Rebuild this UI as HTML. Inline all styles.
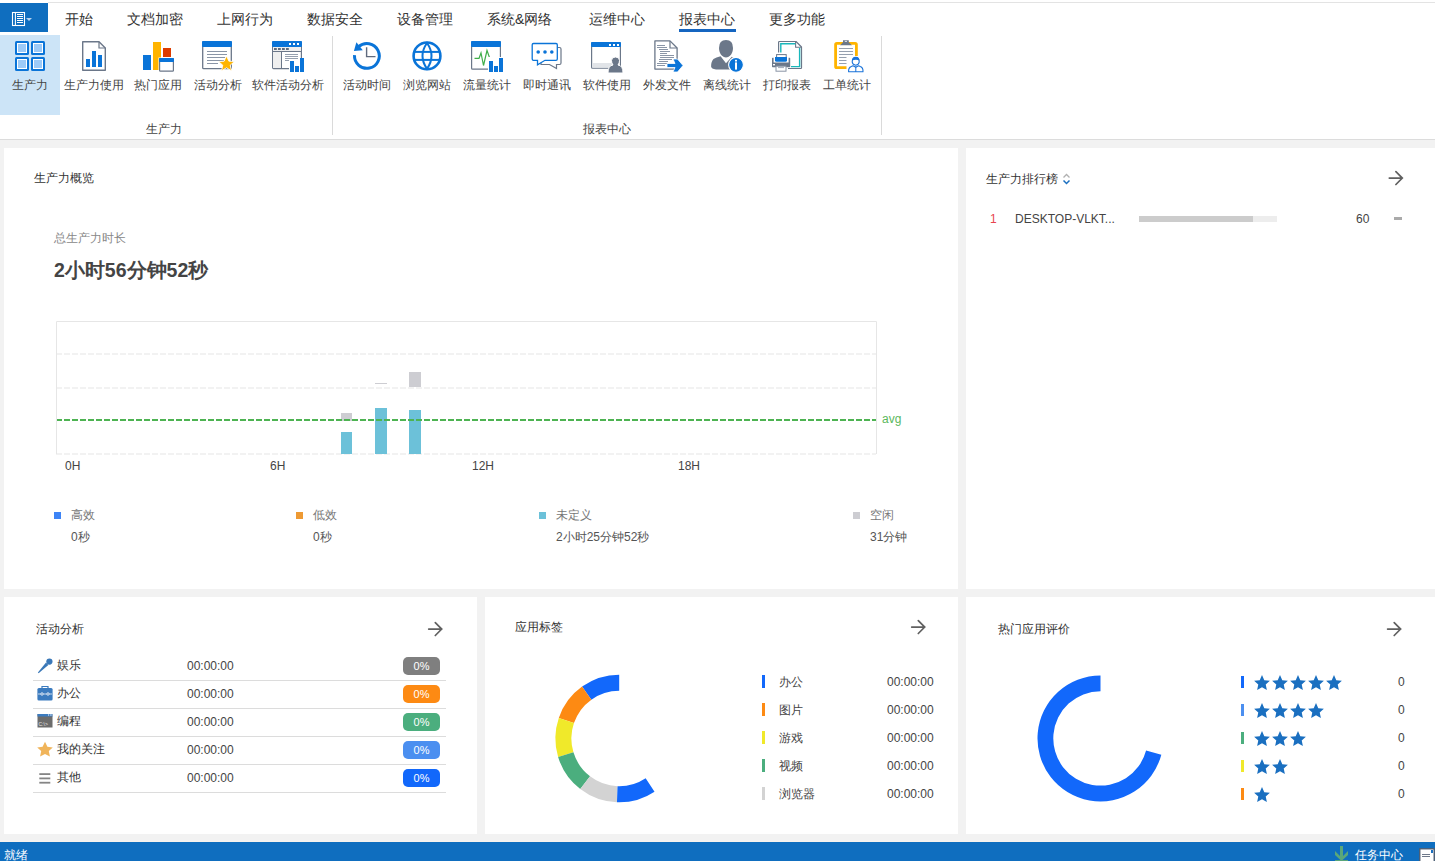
<!DOCTYPE html>
<html><head><meta charset="utf-8">
<style>
*{box-sizing:border-box;margin:0;padding:0}
html,body{width:1435px;height:861px;overflow:hidden;background:#f2f2f2;font-family:"Liberation Sans",sans-serif;color:#333}
.a{position:absolute;white-space:nowrap}
#top{position:absolute;left:0;top:0;width:1435px;height:139px;background:#fff}
#topline{position:absolute;left:48px;top:2px;width:1387px;height:1px;background:#e3e3e3}
#menubtn{position:absolute;left:0;top:3px;width:48px;height:29px;background:#0f6ebf}
.tab{position:absolute;top:11px;font-size:14px;line-height:16px;color:#333}
#uline{position:absolute;left:679px;top:29px;width:57px;height:3px;background:#1565c0}
#sel{position:absolute;left:0;top:35px;width:60px;height:80px;background:#cce4f7}
.rl{position:absolute;top:78px;font-size:12px;line-height:14px;color:#444;text-align:center;width:100px}
.ic{position:absolute;top:41px;width:30px;height:30px}
.sep{position:absolute;top:36px;width:1px;height:99px;background:#dadada}
#rbot{position:absolute;left:0;top:139px;width:1435px;height:1px;background:#dcdcdc}
.panel{position:absolute;background:#fff}
.t12{font-size:12px;line-height:14px}
.badge{left:403px;width:37px;height:18px;border-radius:5px;color:#fff;font-size:11px;line-height:19px;text-align:center}
#status{position:absolute;left:0;top:842px;width:1435px;height:19px;background:#0f6ebf}
</style></head><body>
<div id="top"></div>
<div id="topline"></div>
<div id="menubtn">
<svg width="48" height="29" style="position:absolute;left:0;top:0" viewBox="0 3 48 29">
<rect x="12.5" y="12.5" width="12" height="13" fill="none" stroke="#fff" stroke-width="1.1"/>
<line x1="15.4" y1="12.5" x2="15.4" y2="25.5" stroke="#fff" stroke-width="1.1"/>
<g stroke="#fff" stroke-width="1"><line x1="17" y1="14.5" x2="23" y2="14.5"/><line x1="17" y1="16.5" x2="23" y2="16.5"/><line x1="17" y1="18.5" x2="23" y2="18.5"/><line x1="17" y1="20.5" x2="23" y2="20.5"/><line x1="17" y1="22.5" x2="23" y2="22.5"/></g>
<path d="M26 18 L32 18 L29 21Z" fill="#b8d2ee"/>
</svg>
</div>
<div class="tab" style="left:65px">开始</div>
<div class="tab" style="left:127px">文档加密</div>
<div class="tab" style="left:217px">上网行为</div>
<div class="tab" style="left:307px">数据安全</div>
<div class="tab" style="left:397px">设备管理</div>
<div class="tab" style="left:487px">系统&amp;网络</div>
<div class="tab" style="left:589px">运维中心</div>
<div class="tab" style="left:679px">报表中心</div>
<div class="tab" style="left:769px">更多功能</div>
<div id="uline"></div>
<div id="sel"></div>
<svg class="a" style="left:0;top:0" width="900" height="80" viewBox="0 0 900 80">
<!-- 1 grid -->
<g>
<rect x="15" y="41" width="14" height="14" rx="1.5" fill="#0a74d8"/>
<rect x="31" y="41" width="14" height="14" rx="1.5" fill="#0a74d8"/>
<rect x="15" y="57" width="14" height="14" rx="1.5" fill="#0a74d8"/>
<rect x="31" y="57" width="14" height="14" rx="1.5" fill="#0a74d8"/>
<g fill="#fff"><rect x="17" y="43" width="10" height="10"/><rect x="33" y="43" width="10" height="10"/><rect x="17" y="59" width="10" height="10"/><rect x="33" y="59" width="10" height="10"/></g>
<g fill="#9ccaf8"><rect x="18" y="44" width="8" height="8"/><rect x="34" y="44" width="8" height="8"/><rect x="18" y="60" width="8" height="8"/><rect x="34" y="60" width="8" height="8"/></g>
</g>
<!-- 2 doc chart -->
<g>
<path d="M82.7 41.7 H99 L105.3 48 V70.3 H82.7 Z" fill="#fff" stroke="#6b7789" stroke-width="1.4" stroke-linejoin="round"/>
<path d="M99 41.7 V48 H105.3" fill="none" stroke="#6b7789" stroke-width="1.2"/>
<g fill="#0a74d8"><rect x="86" y="59" width="4" height="8"/><rect x="92" y="51" width="4" height="16"/><rect x="98" y="55" width="4" height="12"/></g>
</g>
<!-- 3 hot apps -->
<g>
<rect x="143" y="55" width="8" height="15" fill="#0a74d8"/>
<rect x="153" y="42" width="8" height="28" fill="#ffb400"/>
<rect x="163" y="48" width="8" height="9" fill="#dc3c00"/>
<rect x="158.5" y="57.5" width="16" height="15" fill="#fff"/>
<rect x="159.6" y="58.6" width="13.8" height="12.6" rx="0.8" fill="#fff" stroke="#6b7789" stroke-width="1.2"/>
<rect x="159" y="58" width="15" height="4" rx="0.8" fill="#0a74d8"/>
</g>
<!-- 4 activity analysis -->
<g>
<rect x="202.7" y="41.7" width="28.6" height="27" rx="1" fill="#fff" stroke="#6b7789" stroke-width="1.3"/>
<rect x="202" y="41" width="30" height="6" rx="1" fill="#0a74d8"/>
<g stroke="#8a95a6" stroke-width="1"><line x1="207" y1="51.5" x2="227" y2="51.5"/><line x1="207" y1="54.5" x2="227" y2="54.5"/><line x1="207" y1="57.5" x2="225" y2="57.5"/><line x1="207" y1="60.5" x2="224" y2="60.5"/><line x1="207" y1="63.5" x2="218" y2="63.5"/></g>
<path d="M226.5 56 L228.9 61.2 L234.4 61.6 L230.2 65.2 L231.5 70.8 L226.5 67.8 L221.5 70.8 L222.8 65.2 L218.6 61.6 L224.1 61.2 Z" fill="#ffb400" stroke="#fff" stroke-width="0.8"/>
</g>
<!-- 5 software activity analysis -->
<g>
<rect x="272.6" y="41.6" width="28.8" height="27" rx="1" fill="#fff" stroke="#6b7789" stroke-width="1.2"/>
<rect x="272" y="41" width="30" height="6" rx="1" fill="#0a74d8"/>
<g fill="#fff"><rect x="289" y="43" width="2" height="2"/><rect x="293" y="43" width="2" height="2"/><rect x="297" y="43" width="2" height="2"/></g>
<rect x="273" y="47" width="28" height="4.5" fill="#efefef"/>
<g fill="#606b7c"><rect x="274" y="48" width="2.8" height="2"/><rect x="278" y="48" width="2.8" height="2"/><rect x="282" y="48" width="2.8" height="2"/><rect x="286" y="48" width="2.8" height="2"/></g>
<line x1="273" y1="51.5" x2="301" y2="51.5" stroke="#6b7789" stroke-width="1"/>
<rect x="273" y="52" width="8" height="16" fill="#efefef"/>
<line x1="281.5" y1="52" x2="281.5" y2="68" stroke="#6b7789" stroke-width="1"/>
<g stroke="#8a95a6" stroke-width="0.9"><line x1="285" y1="54.5" x2="298" y2="54.5"/><line x1="285" y1="56.5" x2="298" y2="56.5"/><line x1="285" y1="58.5" x2="298" y2="58.5"/><line x1="285" y1="60.5" x2="298" y2="60.5"/></g>
<rect x="289" y="60" width="16" height="13" fill="#fff"/>
<g fill="#0a74d8"><rect x="290" y="61" width="4" height="11"/><rect x="295" y="66" width="4" height="6"/><rect x="300" y="58" width="4" height="14"/></g>
</g>
<!-- 6 clock -->
<g>
<path d="M358.6 46.7 A12.4 12.4 0 1 1 354.5 55.2" fill="none" stroke="#0a74d8" stroke-width="3"/>
<path d="M356.4 42.2 L353.9 50.9 L362.8 50.2 Z" fill="#0a74d8"/>
<path d="M366.6 47.2 V56.6 H375.5" fill="none" stroke="#5f6a7d" stroke-width="1.4"/>
</g>
<!-- 7 globe -->
<g fill="none" stroke="#0a74d8">
<circle cx="427" cy="55.9" r="13.4" stroke-width="2.6"/>
<path d="M427 43 Q418 55.9 427 68.8 Q436 55.9 427 43 Z" stroke-width="2"/>
<line x1="414" y1="51.9" x2="440" y2="51.9" stroke-width="2"/>
<line x1="414" y1="59.9" x2="440" y2="59.9" stroke-width="2"/>
</g>
<!-- 8 traffic -->
<g>
<rect x="471.6" y="41.6" width="28.8" height="27.6" rx="1" fill="#fff" stroke="#6b7789" stroke-width="1.2"/>
<rect x="471" y="41" width="30" height="6" rx="1" fill="#0a74d8"/>
<polyline points="474.5,58.4 479,58.4 481,53 483.5,65.5 487,50.5 490,59 492,58.4 497.5,58.4" fill="none" stroke="#3fae49" stroke-width="1.2"/>
<rect x="488" y="57" width="17" height="16" fill="#fff"/>
<g fill="#0a74d8"><rect x="489" y="61" width="4" height="11"/><rect x="494" y="66" width="4" height="6"/><rect x="499" y="58" width="4" height="14"/></g>
</g>
<!-- 9 IM -->
<g>
<path d="M541 47.5 H559.5 Q561 47.5 561 49 V63 Q561 64.5 559.5 64.5 H556.5 V68.5 L549.5 64.5 H541 Z" fill="#fff" stroke="#6b7789" stroke-width="1.2"/>
<path d="M533.5 43.5 H556 Q557.3 43.5 557.3 44.8 V59 Q557.3 60.3 556 60.3 H545 L537.5 64.8 V60.3 H533.5 Q532.2 60.3 532.2 59 V44.8 Q532.2 43.5 533.5 43.5 Z" fill="#fff" stroke="#0a74d8" stroke-width="1.3"/>
<g fill="#0a74d8"><circle cx="538.2" cy="52" r="1.8"/><circle cx="545" cy="52" r="1.8"/><circle cx="551.8" cy="52" r="1.8"/></g>
</g>
<!-- 10 software usage -->
<g>
<rect x="591.6" y="42.6" width="28.8" height="25.6" rx="1" fill="#fff" stroke="#6b7789" stroke-width="1.2"/>
<rect x="591" y="42" width="30" height="5" rx="1" fill="#0a74d8"/>
<g fill="#fff"><rect x="609" y="44" width="2" height="2"/><rect x="613" y="44" width="2" height="2"/><rect x="617" y="44" width="2" height="2"/></g>
<rect x="592.3" y="63" width="20" height="4.8" fill="#e1e4e8"/>
<path d="M608 73 Q608 65.5 613 65 Q611.5 63 611.5 60.5 Q611.5 57 615.5 57 Q619.5 57 619.5 60.5 Q619.5 63 618 65 Q623 65.5 623 73 Z" fill="#6b7789" stroke="#fff" stroke-width="1"/>
</g>
<!-- 11 outgoing file -->
<g>
<path d="M654.9 40.9 H670 L677.1 48 V69.1 H654.9 Z" fill="#fff" stroke="#6b7789" stroke-width="1.3" stroke-linejoin="round"/>
<path d="M670 40.9 V48 H677.1" fill="none" stroke="#6b7789" stroke-width="1.2"/>
<g stroke="#8a95a6" stroke-width="1"><line x1="657" y1="45.5" x2="665" y2="45.5"/><line x1="657" y1="47.5" x2="667" y2="47.5"/><line x1="659" y1="49.5" x2="668" y2="49.5"/><line x1="660" y1="51.5" x2="670" y2="51.5"/><line x1="660" y1="53.5" x2="667" y2="53.5"/><line x1="660" y1="55.5" x2="674" y2="55.5"/><line x1="660" y1="57.5" x2="674" y2="57.5"/><line x1="659" y1="59.5" x2="672" y2="59.5"/><line x1="659" y1="61.5" x2="668" y2="61.5"/><line x1="657" y1="63.5" x2="668" y2="63.5"/><line x1="657" y1="65.5" x2="665" y2="65.5"/></g>
<path d="M667 63.5 H675 L673 59 H677.5 L683 65.5 L677.5 72 H673 L675 67.5 H667 Z" fill="#0a74d8" stroke="#fff" stroke-width="0.8"/>
</g>
<!-- 12 offline -->
<g>
<path d="M726 40.1 Q733 40.1 733 48 Q733 53 730 55.8 Q728.2 57.6 726 57.6 Q723.8 57.6 722 55.8 Q719 53 719 48 Q719 40.1 726 40.1 Z" fill="#6b7789"/>
<path d="M720.6 56.3 L726 63.2 L731.8 56.8 L741 62 V69.4 H716 Q711.3 69 711.1 66.5 Q711 61.5 713.5 59 Q716 57.2 720.6 56.3 Z" fill="#6b7789"/>
<circle cx="736" cy="64.8" r="7.4" fill="#0a74d8" stroke="#fff" stroke-width="1.1"/>
<rect x="735" y="62.4" width="2" height="7.2" fill="#fff"/>
<rect x="735" y="59.8" width="2" height="1.7" fill="#fff"/>
</g>
<!-- 13 print -->
<g>
<path d="M778.6 52.5 V42.3 Q778.6 41.5 779.4 41.5 H796 L801.5 47 V67.8 Q801.5 68.5 800.8 68.5 H788" fill="#fff" stroke="#6b7789" stroke-width="1.2" stroke-linejoin="round"/>
<path d="M795.6 41.8 V47.2 H801.2" fill="none" stroke="#6b7789" stroke-width="1.1"/>
<path d="M780.8 52.6 V43.8 H795.3" fill="none" stroke="#1ab8bc" stroke-width="1.4"/>
<path d="M799.6 48 V66.6 H791" fill="none" stroke="#1ab8bc" stroke-width="1.4"/>
<rect x="776.6" y="54.6" width="9.6" height="3.6" fill="#fff" stroke="#6b7789" stroke-width="1"/>
<path d="M772 58.3 Q772 57.8 772.6 57.8 H773.6 V62.5 H788.6 V57.8 H789.6 Q790.2 57.8 790.2 58.3 V66.6 Q790.2 67.2 789.6 67.2 H772.6 Q772 67.2 772 66.6 Z" fill="#6b7789"/>
<path d="M775 57 H787 V60.3 Q787 61.8 785.5 61.8 H776.5 Q775 61.8 775 60.3 Z" fill="#0a74d8"/>
<rect x="773" y="64" width="2" height="1.4" fill="#fff"/>
<rect x="776" y="66.2" width="10" height="5" fill="#fff" stroke="#8a95a6" stroke-width="1"/>
<line x1="778" y1="67.6" x2="784" y2="67.6" stroke="#8a95a6" stroke-width="0.8"/>
</g>
<!-- 14 work order -->
<g>
<rect x="835.6" y="43.4" width="20.8" height="24.2" rx="1.2" fill="#fff" stroke="#ffb400" stroke-width="2.8"/>
<path d="M840 45.2 L843 42.2 V40.2 H848.8 V42.2 L852 45.2 Z" fill="#6b7789"/>
<rect x="844.8" y="40.9" width="2.2" height="1" fill="#dfe3e8"/>
<g stroke="#8a95a6" stroke-width="0.9"><line x1="839" y1="48.5" x2="853" y2="48.5"/><line x1="839" y1="51.5" x2="853" y2="51.5"/><line x1="839" y1="54.5" x2="853" y2="54.5"/><line x1="839" y1="57.5" x2="852" y2="57.5"/><line x1="839" y1="60.5" x2="851" y2="60.5"/><line x1="839" y1="63.5" x2="851" y2="63.5"/></g>
<rect x="846.5" y="56" width="18" height="17" fill="#fff"/>
<path d="M852.2 62 Q852.2 57.2 855.8 57.2 Q859.2 57.2 859.2 62 Q859 64.6 855.8 65.3 Q852.4 64.6 852.2 62 Z" fill="#fff" stroke="#1a73d9" stroke-width="1.1"/>
<path d="M852 60.5 Q852.5 57 855.8 57 Q859.2 57 859.5 60.5 Q856 59.2 852 60.5 Z" fill="#1a73d9"/>
<path d="M848.6 71.8 Q848.3 67.8 851.3 66.6 L853 65.8 L855.8 67.2 L858.6 65.8 L860.3 66.6 Q863.3 67.8 863 71.8 Z" fill="#fff" stroke="#1a73d9" stroke-width="1.1" stroke-linejoin="round"/>
<line x1="855.8" y1="66.5" x2="855.8" y2="72" stroke="#1a73d9" stroke-width="1"/>
</g>
</svg>


<!-- ribbon labels -->
<div class="rl" style="left:-20px">生产力</div>
<div class="rl" style="left:44px">生产力使用</div>
<div class="rl" style="left:108px">热门应用</div>
<div class="rl" style="left:168px">活动分析</div>
<div class="rl" style="left:238px">软件活动分析</div>
<div class="rl" style="left:317px">活动时间</div>
<div class="rl" style="left:377px">浏览网站</div>
<div class="rl" style="left:437px">流量统计</div>
<div class="rl" style="left:497px">即时通讯</div>
<div class="rl" style="left:557px">软件使用</div>
<div class="rl" style="left:617px">外发文件</div>
<div class="rl" style="left:677px">离线统计</div>
<div class="rl" style="left:737px">打印报表</div>
<div class="rl" style="left:797px">工单统计</div>
<div class="rl" style="left:114px;top:122px">生产力</div>
<div class="rl" style="left:557px;top:122px">报表中心</div>
<div class="sep" style="left:332px"></div>
<div class="sep" style="left:881px"></div>
<div id="rbot"></div>

<!-- panels -->
<div class="panel" style="left:4px;top:148px;width:954px;height:441px"></div>
<div class="panel" style="left:966px;top:148px;width:469px;height:441px"></div>
<div class="panel" style="left:4px;top:597px;width:473px;height:237px"></div>
<div class="panel" style="left:485px;top:597px;width:473px;height:237px"></div>
<div class="panel" style="left:966px;top:597px;width:469px;height:237px"></div>

<div class="a t12" style="left:34px;top:171px;color:#333">生产力概览</div>
<div class="a t12" style="left:54px;top:231px;color:#888">总生产力时长</div>
<div class="a" style="left:54px;top:259px;font-size:19.5px;line-height:22px;font-weight:bold;color:#444">2小时56分钟52秒</div>

<!-- chart -->
<svg class="a" style="left:0;top:300px" width="958" height="180" viewBox="0 300 958 180">
<g stroke="#e6e6e6" stroke-width="1.2" stroke-dasharray="6 2">
<line x1="56" y1="354" x2="876" y2="354"/>
<line x1="56" y1="388" x2="876" y2="388"/>
<line x1="56" y1="454" x2="876" y2="454"/>
</g>
<g fill="#cdcdd2"><rect x="341" y="413" width="11" height="8"/><rect x="375" y="383" width="12" height="1"/><rect x="409" y="372" width="12" height="15"/></g>
<g fill="#6cc1d9"><rect x="341" y="432" width="11" height="22"/><rect x="375" y="408" width="12" height="46"/><rect x="409" y="410" width="12" height="44"/></g>
<line x1="56" y1="420" x2="877" y2="420" stroke="#4db352" stroke-width="2" stroke-dasharray="6 2"/>
<g stroke="#e6e6e6" stroke-width="1" fill="none">
<path d="M56.5 454 V321.5 H876.5 V454"/>
</g>

</svg>
<div class="a t12" style="left:882px;top:412px;color:#5cb85c">avg</div>
<div class="a t12" style="left:65px;top:459px;color:#444">0H</div>
<div class="a t12" style="left:270px;top:459px;color:#444">6H</div>
<div class="a t12" style="left:472px;top:459px;color:#444">12H</div>
<div class="a t12" style="left:678px;top:459px;color:#444">18H</div>

<!-- legend -->
<div class="a" style="left:54px;top:512px;width:7px;height:7px;background:#3d84f6"></div>
<div class="a t12" style="left:71px;top:508px;color:#777">高效</div>
<div class="a t12" style="left:71px;top:530px;color:#555">0秒</div>
<div class="a" style="left:296px;top:512px;width:7px;height:7px;background:#ee9a34"></div>
<div class="a t12" style="left:313px;top:508px;color:#777">低效</div>
<div class="a t12" style="left:313px;top:530px;color:#555">0秒</div>
<div class="a" style="left:539px;top:512px;width:7px;height:7px;background:#6cc1d9"></div>
<div class="a t12" style="left:556px;top:508px;color:#777">未定义</div>
<div class="a t12" style="left:556px;top:530px;color:#555">2小时25分钟52秒</div>
<div class="a" style="left:853px;top:512px;width:7px;height:7px;background:#cdcdd2"></div>
<div class="a t12" style="left:870px;top:508px;color:#777">空闲</div>
<div class="a t12" style="left:870px;top:530px;color:#555">31分钟</div>

<!-- ranking -->
<div class="a t12" style="left:986px;top:172px;color:#333">生产力排行榜</div>
<svg class="a" style="left:1062px;top:173px" width="10" height="12" viewBox="0 0 10 12">
<path d="M1.5 4.5 L4.5 1.5 L7.5 4.5" fill="none" stroke="#b0b0b0" stroke-width="1.3"/>
<path d="M1.5 7.5 L4.5 10.5 L7.5 7.5" fill="none" stroke="#1a6fc0" stroke-width="1.5"/>
</svg>

<div class="a t12" style="left:990px;top:212px;color:#e8434e">1</div>
<div class="a t12" style="left:1015px;top:212px;color:#444">DESKTOP-VLKT...</div>
<div class="a" style="left:1139px;top:216px;width:138px;height:6px;background:#ededed"></div>
<div class="a" style="left:1139px;top:216px;width:114px;height:6px;background:#cccccc"></div>
<div class="a t12" style="left:1356px;top:212px;color:#444">60</div>
<div class="a" style="left:1394px;top:217px;width:8px;height:3px;background:#aaa"></div>

<!-- activity analysis -->
<div class="a t12" style="left:36px;top:622px;color:#333">活动分析</div>

<div class="a" style="left:33px;top:680px;width:413px;height:1px;background:#dcdcdc"></div>
<div class="a" style="left:33px;top:708px;width:413px;height:1px;background:#dcdcdc"></div>
<div class="a" style="left:33px;top:736px;width:413px;height:1px;background:#dcdcdc"></div>
<div class="a" style="left:33px;top:764px;width:413px;height:1px;background:#dcdcdc"></div>
<div class="a" style="left:33px;top:792px;width:413px;height:1px;background:#dcdcdc"></div>
<svg class="a" style="left:0;top:650px" width="60" height="140" viewBox="0 650 60 140">
<!-- mic -->
<circle cx="49.4" cy="661.6" r="3.1" fill="#3a78b8"/>
<path d="M46 662.6 L48.4 665 L38.6 673.2 L37.9 672.5 Z" fill="#3a78b8"/>
<!-- briefcase -->
<path d="M42 688 V686.5 H48 V688" fill="none" stroke="#3b7bbf" stroke-width="1.2"/>
<rect x="37.4" y="688" width="15.2" height="12.5" rx="1.5" fill="#3b7bbf"/>
<line x1="38" y1="694" x2="52" y2="694" stroke="#c8d9ec" stroke-width="1"/>
<circle cx="42" cy="694" r="1.3" fill="none" stroke="#c8d9ec" stroke-width="0.9"/>
<circle cx="48" cy="694" r="1.3" fill="none" stroke="#c8d9ec" stroke-width="0.9"/>
<!-- terminal -->
<rect x="37.5" y="714" width="15" height="13.5" fill="#6c6c6c"/>
<rect x="37.5" y="714" width="15" height="2.5" fill="#3b7bbf"/>
<g fill="#fff"><rect x="48" y="714.5" width="1" height="1"/><rect x="49.8" y="714.5" width="1" height="1"/><rect x="51.4" y="714.5" width="1" height="1"/></g>
<text x="38.5" y="726" font-size="5" fill="#e8e8e8" font-family="Liberation Sans">C:\&gt;</text>
<!-- star -->
<path d="M45 741.8 L47.4 746.7 L52.8 747.4 L48.8 751.1 L49.9 756.6 L45 753.9 L40.1 756.6 L41.2 751.1 L37.2 747.4 L42.6 746.7 Z" fill="#f0b45a"/>
<!-- list -->
<g fill="#858585"><rect x="39.3" y="773.2" width="11" height="1.8"/><rect x="39.3" y="777.5" width="11" height="1.8"/><rect x="39.3" y="781.8" width="11" height="1.8"/></g>
</svg>
<div class="a t12" style="left:57px;top:658px;color:#333">娱乐</div>
<div class="a t12" style="left:57px;top:686px;color:#333">办公</div>
<div class="a t12" style="left:57px;top:714px;color:#333">编程</div>
<div class="a t12" style="left:57px;top:742px;color:#333">我的关注</div>
<div class="a t12" style="left:57px;top:770px;color:#333">其他</div>
<div class="a t12" style="left:187px;top:659px;color:#444">00:00:00</div>
<div class="a t12" style="left:187px;top:687px;color:#444">00:00:00</div>
<div class="a t12" style="left:187px;top:715px;color:#444">00:00:00</div>
<div class="a t12" style="left:187px;top:743px;color:#444">00:00:00</div>
<div class="a t12" style="left:187px;top:771px;color:#444">00:00:00</div>
<div class="a badge" style="top:657px;background:#7f7f7f">0%</div>
<div class="a badge" style="top:685px;background:#fd8a13">0%</div>
<div class="a badge" style="top:713px;background:#4bae7e">0%</div>
<div class="a badge" style="top:741px;background:#4b8ff0">0%</div>
<div class="a badge" style="top:769px;background:#1268fb">0%</div>

<!-- app tags -->
<div class="a t12" style="left:515px;top:620px;color:#333">应用标签</div>

<svg class="a" id="donut1" style="left:540px;top:660px" width="140" height="160" viewBox="540 660 140 160"><path d="M619.20 674.70 A63.8 63.8 0 0 0 582.06 686.62 L591.37 699.63 A47.8 47.8 0 0 1 619.20 690.70 Z" fill="#1268fb"/><path d="M582.06 686.62 A63.8 63.8 0 0 0 558.80 717.94 L573.95 723.10 A47.8 47.8 0 0 1 591.37 699.63 Z" fill="#fd8a13"/><path d="M558.80 717.94 A63.8 63.8 0 0 0 558.12 756.94 L573.44 752.32 A47.8 47.8 0 0 1 573.95 723.10 Z" fill="#f0e92a"/><path d="M558.12 756.94 A63.8 63.8 0 0 0 580.27 789.05 L590.04 776.37 A47.8 47.8 0 0 1 573.44 752.32 Z" fill="#4bae7e"/><path d="M580.27 789.05 A63.8 63.8 0 0 0 616.97 802.26 L617.53 786.27 A47.8 47.8 0 0 1 590.04 776.37 Z" fill="#d3d3d3"/><path d="M616.97 802.26 A63.8 63.8 0 0 0 654.51 791.64 L645.65 778.31 A47.8 47.8 0 0 1 617.53 786.27 Z" fill="#1268fb"/></svg>
<div class="a" style="left:762px;top:675px;width:3px;height:13px;background:#1268fb"></div>
<div class="a" style="left:762px;top:703px;width:3px;height:13px;background:#fd8a13"></div>
<div class="a" style="left:762px;top:731px;width:3px;height:13px;background:#f0e92a"></div>
<div class="a" style="left:762px;top:759px;width:3px;height:13px;background:#4bae7e"></div>
<div class="a" style="left:762px;top:787px;width:3px;height:13px;background:#d3d3d3"></div>
<div class="a t12" style="left:779px;top:675px;color:#444">办公</div>
<div class="a t12" style="left:779px;top:703px;color:#444">图片</div>
<div class="a t12" style="left:779px;top:731px;color:#444">游戏</div>
<div class="a t12" style="left:779px;top:759px;color:#444">视频</div>
<div class="a t12" style="left:779px;top:787px;color:#444">浏览器</div>
<div class="a t12" style="left:887px;top:675px;color:#444">00:00:00</div>
<div class="a t12" style="left:887px;top:703px;color:#444">00:00:00</div>
<div class="a t12" style="left:887px;top:731px;color:#444">00:00:00</div>
<div class="a t12" style="left:887px;top:759px;color:#444">00:00:00</div>
<div class="a t12" style="left:887px;top:787px;color:#444">00:00:00</div>

<!-- hot app rating -->
<div class="a t12" style="left:998px;top:622px;color:#333">热门应用评价</div>

<svg class="a" id="donut2" style="left:1020px;top:660px" width="160" height="160" viewBox="1020 660 160 160"><path d="M1100.50 675.40 A63.0 63.0 0 1 0 1161.35 754.71 L1146.09 750.62 A47.2 47.2 0 1 1 1100.50 691.20 Z" fill="#1268fb"/></svg>
<div class="a" style="left:1241px;top:676px;width:3px;height:12px;background:#1268fb"></div>
<div class="a" style="left:1241px;top:704px;width:3px;height:12px;background:#4b8ff0"></div>
<div class="a" style="left:1241px;top:732px;width:3px;height:12px;background:#4bae7e"></div>
<div class="a" style="left:1241px;top:760px;width:3px;height:12px;background:#f0e92a"></div>
<div class="a" style="left:1241px;top:788px;width:3px;height:12px;background:#fd8a13"></div>
<svg class="a" id="stars" style="left:1250px;top:670px" width="100" height="140" viewBox="1250 670 100 140"><polygon points="1262.00,675.00 1264.29,680.14 1269.89,680.74 1265.71,684.51 1266.88,690.01 1262.00,687.20 1257.12,690.01 1258.29,684.51 1254.11,680.74 1259.71,680.14" fill="#1a6fc0"/><polygon points="1280.00,675.00 1282.29,680.14 1287.89,680.74 1283.71,684.51 1284.88,690.01 1280.00,687.20 1275.12,690.01 1276.29,684.51 1272.11,680.74 1277.71,680.14" fill="#1a6fc0"/><polygon points="1298.00,675.00 1300.29,680.14 1305.89,680.74 1301.71,684.51 1302.88,690.01 1298.00,687.20 1293.12,690.01 1294.29,684.51 1290.11,680.74 1295.71,680.14" fill="#1a6fc0"/><polygon points="1316.00,675.00 1318.29,680.14 1323.89,680.74 1319.71,684.51 1320.88,690.01 1316.00,687.20 1311.12,690.01 1312.29,684.51 1308.11,680.74 1313.71,680.14" fill="#1a6fc0"/><polygon points="1334.00,675.00 1336.29,680.14 1341.89,680.74 1337.71,684.51 1338.88,690.01 1334.00,687.20 1329.12,690.01 1330.29,684.51 1326.11,680.74 1331.71,680.14" fill="#1a6fc0"/><polygon points="1262.00,703.00 1264.29,708.14 1269.89,708.74 1265.71,712.51 1266.88,718.01 1262.00,715.20 1257.12,718.01 1258.29,712.51 1254.11,708.74 1259.71,708.14" fill="#1a6fc0"/><polygon points="1280.00,703.00 1282.29,708.14 1287.89,708.74 1283.71,712.51 1284.88,718.01 1280.00,715.20 1275.12,718.01 1276.29,712.51 1272.11,708.74 1277.71,708.14" fill="#1a6fc0"/><polygon points="1298.00,703.00 1300.29,708.14 1305.89,708.74 1301.71,712.51 1302.88,718.01 1298.00,715.20 1293.12,718.01 1294.29,712.51 1290.11,708.74 1295.71,708.14" fill="#1a6fc0"/><polygon points="1316.00,703.00 1318.29,708.14 1323.89,708.74 1319.71,712.51 1320.88,718.01 1316.00,715.20 1311.12,718.01 1312.29,712.51 1308.11,708.74 1313.71,708.14" fill="#1a6fc0"/><polygon points="1262.00,731.00 1264.29,736.14 1269.89,736.74 1265.71,740.51 1266.88,746.01 1262.00,743.20 1257.12,746.01 1258.29,740.51 1254.11,736.74 1259.71,736.14" fill="#1a6fc0"/><polygon points="1280.00,731.00 1282.29,736.14 1287.89,736.74 1283.71,740.51 1284.88,746.01 1280.00,743.20 1275.12,746.01 1276.29,740.51 1272.11,736.74 1277.71,736.14" fill="#1a6fc0"/><polygon points="1298.00,731.00 1300.29,736.14 1305.89,736.74 1301.71,740.51 1302.88,746.01 1298.00,743.20 1293.12,746.01 1294.29,740.51 1290.11,736.74 1295.71,736.14" fill="#1a6fc0"/><polygon points="1262.00,759.00 1264.29,764.14 1269.89,764.74 1265.71,768.51 1266.88,774.01 1262.00,771.20 1257.12,774.01 1258.29,768.51 1254.11,764.74 1259.71,764.14" fill="#1a6fc0"/><polygon points="1280.00,759.00 1282.29,764.14 1287.89,764.74 1283.71,768.51 1284.88,774.01 1280.00,771.20 1275.12,774.01 1276.29,768.51 1272.11,764.74 1277.71,764.14" fill="#1a6fc0"/><polygon points="1262.00,787.00 1264.29,792.14 1269.89,792.74 1265.71,796.51 1266.88,802.01 1262.00,799.20 1257.12,802.01 1258.29,796.51 1254.11,792.74 1259.71,792.14" fill="#1a6fc0"/></svg>
<div class="a t12" style="left:1398px;top:675px;color:#444">0</div>
<div class="a t12" style="left:1398px;top:703px;color:#444">0</div>
<div class="a t12" style="left:1398px;top:731px;color:#444">0</div>
<div class="a t12" style="left:1398px;top:759px;color:#444">0</div>
<div class="a t12" style="left:1398px;top:787px;color:#444">0</div>

<svg class="a" style="left:1383px;top:168px" width="24" height="20" viewBox="1383 168 24 20"><path d="M1389.3 178.1 H1402.3 M1395.9 171.7 L1402.3 178.1 L1395.9 184.5" fill="none" stroke="#606060" stroke-width="1.7" stroke-linecap="round" stroke-linejoin="miter"/></svg>
<svg class="a" style="left:422px;top:619px" width="24" height="20" viewBox="422 619 24 20"><path d="M428.7 629.1 H441.7 M435.3 622.7 L441.7 629.1 L435.3 635.5" fill="none" stroke="#606060" stroke-width="1.7" stroke-linecap="round" stroke-linejoin="miter"/></svg>
<svg class="a" style="left:905px;top:617px" width="24" height="20" viewBox="905 617 24 20"><path d="M911.7 627.1 H924.7 M918.3 620.7 L924.7 627.1 L918.3 633.5" fill="none" stroke="#606060" stroke-width="1.7" stroke-linecap="round" stroke-linejoin="miter"/></svg>
<svg class="a" style="left:1381px;top:619px" width="24" height="20" viewBox="1381 619 24 20"><path d="M1387.6 629.1 H1400.6 M1394.2 622.7 L1400.6 629.1 L1394.2 635.5" fill="none" stroke="#606060" stroke-width="1.7" stroke-linecap="round" stroke-linejoin="miter"/></svg>
<div id="status"></div>
<div class="a" style="left:0;top:841px;width:1435px;height:1px;background:#f7f3ee"></div>
<div class="a t12" style="left:4px;top:848px;color:#fff">就绪</div>
<div class="a t12" style="left:1355px;top:848px;color:#fff">任务中心</div>
<svg class="a" style="left:1330px;top:842px" width="105" height="19" viewBox="1330 842 105 19">
<rect x="1340" y="846" width="3" height="12" fill="#5aa77a"/>
<path d="M1335 851 L1341.5 857.5 L1348 851 V855 L1341.5 861 L1335 855 Z" fill="#5aa77a"/>
<rect x="1335" y="860" width="13" height="2" fill="#5aa77a"/>
<rect x="1419.8" y="848.8" width="14.4" height="13" fill="#fff" stroke="#4f5a6a" stroke-width="1.3"/>
<rect x="1431" y="850" width="2" height="3" fill="#1a6fc0"/>
<g stroke="#5f6a7d" stroke-width="0.9"><line x1="1422" y1="854.5" x2="1430" y2="854.5"/><line x1="1422" y1="856.5" x2="1430" y2="856.5"/></g>
</svg>
</body></html>
